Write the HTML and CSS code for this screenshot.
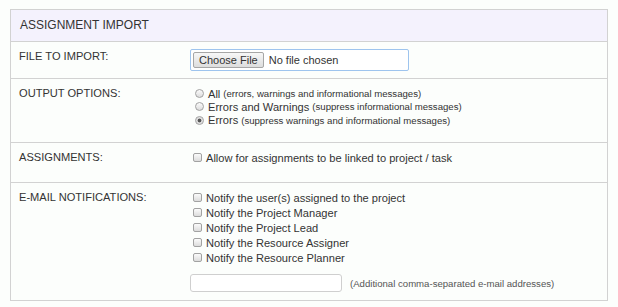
FILE: index.html
```html
<!DOCTYPE html>
<html lang="en">
<head>
  <meta charset="UTF-8" />
  <title>Assignment Import</title>
  <link rel="stylesheet" href="styles.css">
</head>
<body>
  <div class="panel">
    <div class="panel-head">ASSIGNMENT IMPORT</div>

    <!-- file -->
    <div class="row row-file">
      <div class="row-label">FILE TO IMPORT:</div>
      <div class="row-field">
        <div class="file-box">
          <span class="file-btn">Choose File</span>
          <span class="file-name">No file chosen</span>
        </div>
      </div>
    </div>

    <!-- output options -->
    <div class="row row-output">
      <div class="row-label">OUTPUT OPTIONS:</div>
      <div class="row-field opts">
        <label><input type="radio" name="output" /> All <small>(errors, warnings and informational messages)</small></label>
        <label><input type="radio" name="output" /> Errors and Warnings <small>(suppress informational messages)</small></label>
        <label><input type="radio" name="output" checked /> Errors <small>(suppress warnings and informational messages)</small></label>
      </div>
    </div>

    <!-- assignments -->
    <div class="row row-assign">
      <div class="row-label">ASSIGNMENTS:</div>
      <div class="row-field checks">
        <label><input type="checkbox" /> Allow for assignments to be linked to project / task</label>
      </div>
    </div>

    <!-- e-mail -->
    <div class="row row-mail">
      <div class="row-label">E-MAIL NOTIFICATIONS:</div>
      <div class="row-field checks">
        <label><input type="checkbox" /> Notify the user(s) assigned to the project</label>
        <label><input type="checkbox" /> Notify the Project Manager</label>
        <label><input type="checkbox" /> Notify the Project Lead</label>
        <label><input type="checkbox" /> Notify the Resource Assigner</label>
        <label><input type="checkbox" /> Notify the Resource Planner</label>
        <div class="extra">
          <input type="text" class="extra-input" />
          <span class="hint">(Additional comma-separated e-mail addresses)</span>
        </div>
      </div>
    </div>
  </div>
</body>
</html>
```

FILE: styles.css
```css
:root {
  --border: #d2d2d2;
  --head-bg: #f4f2fd;
  --bg: #fcfefc;
  --text: #333;
}
* { box-sizing: border-box; margin: 0; padding: 0; }
body {
  margin: 9px 0 0 10px;
  font-family: 'Liberation Sans', Arial, sans-serif;
  font-size: 11.1px;
  color: var(--text);
  background: var(--bg);
}
.panel {
  width: 598px;
  border: 1px solid var(--border);
}
.panel-head {
  height: 32px;
  padding: 8px 9px 0;
  font-size: 12px;
  line-height: 14px;
  background: var(--head-bg);
  border-bottom: 1px solid var(--border);
}
.row {
  display: grid;
  grid-template-columns: 179px 1fr;
  border-bottom: 1px solid var(--border);
}
.row:last-child { border-bottom: none; }
.row-file { height: 37px; }
.row-output { height: 64px; }
.row-assign { height: 40px; }
.row-mail { height: 117px; }
.row-label {
  padding: 7px 0 0 8px;
  line-height: 14px;
}
.row-field { padding-top: 7px; }
.opts { padding-top: 8px; }

/* file picker */
.file-box {
  display: flex;
  align-items: center;
  width: 219px;
  height: 22px;
  padding: 0 2px;
  font-size: 11px;
  border: 1px solid #9ec4ee;
  border-radius: 2px;
  background: #fff;
}
.file-btn {
  height: 16px;
  padding: 0 5px;
  line-height: 14px;
  border: 1px solid #a6a6a6;
  border-radius: 2px;
  background: linear-gradient(#f7f7f7, #dddddd);
}
.file-name { margin-left: 5px; }

/* radio + checkbox lists */
.opts label, .checks label {
  display: flex;
  align-items: center;
}
.opts label { height: 13.3px; }
.checks label { height: 15px; }
.opts small { font-size: 9.6px; margin-left: 3px; }

input[type="radio"], input[type="checkbox"] {
  appearance: none;
  flex: none;
  width: 9px;
  height: 9px;
  margin: 0 4px;
  border: 1px solid #a2a2a2;
  background: linear-gradient(#fbfbfb, #dcdcdc);
}
input[type="checkbox"] { border-radius: 2px; margin-left: 3px; }
input[type="radio"] { border-radius: 50%; margin-left: 5px; }
input[type="radio"]:checked {
  background: radial-gradient(circle, #555 0 1.6px, #d8d8d8 2.2px, #f4f4f4);
}

.extra {
  display: flex;
  align-items: center;
  margin-top: 9px;
}
.extra-input {
  width: 152px;
  height: 18px;
  border: 1px solid #cfcfcf;
  border-radius: 3px;
  background: #fff;
}
.hint {
  margin-left: 8px;
  font-size: 9.6px;
  color: #555;
}
```
